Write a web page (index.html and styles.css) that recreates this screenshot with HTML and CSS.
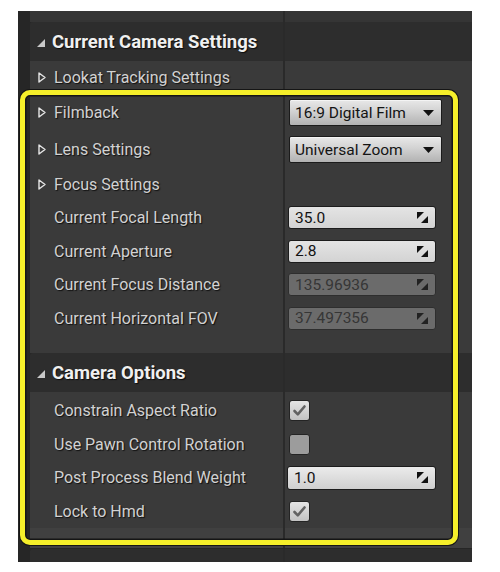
FILE: index.html
```html
<!DOCTYPE html>
<html>
<head>
<meta charset="utf-8">
<link rel="stylesheet" href="styles.css">
</head>
<body>
<div class="panel">
  <div class="strip split"></div>

  <div class="cat-header split">
    <div class="hcell">
      <svg class="tri-open" width="8" height="8" viewBox="0 0 8 8"><polygon points="8,0 8,8 0,8" fill="#c9c9c9"/></svg>
      <span class="htext">Current Camera Settings</span>
    </div>
  </div>
  <div class="cat-body split">
    <div class="row h33">
      <div class="lcell"><svg class="tri-closed" width="8" height="11" viewBox="0 0 8 11"><polygon points="1,1 7,5.5 1,10" fill="none" stroke="#e6e6e6" stroke-width="1.4" stroke-linejoin="round"/></svg><span class="label">Lookat Tracking Settings</span></div>
      <div class="vcell"></div>
    </div>
    <div class="row h37">
      <div class="lcell"><svg class="tri-closed" width="8" height="11" viewBox="0 0 8 11"><polygon points="1,1 7,5.5 1,10" fill="none" stroke="#e6e6e6" stroke-width="1.4" stroke-linejoin="round"/></svg><span class="label">Filmback</span></div>
      <div class="vcell"><div class="combo"><span>16:9 Digital Film</span><svg width="11" height="6" viewBox="0 0 11 6"><polygon points="0,0 11,0 5.5,6" fill="#111"/></svg></div></div>
    </div>
    <div class="row h37">
      <div class="lcell"><svg class="tri-closed" width="8" height="11" viewBox="0 0 8 11"><polygon points="1,1 7,5.5 1,10" fill="none" stroke="#e6e6e6" stroke-width="1.4" stroke-linejoin="round"/></svg><span class="label">Lens Settings</span></div>
      <div class="vcell"><div class="combo"><span>Universal Zoom</span><svg width="11" height="6" viewBox="0 0 11 6"><polygon points="0,0 11,0 5.5,6" fill="#111"/></svg></div></div>
    </div>
    <div class="row h33">
      <div class="lcell"><svg class="tri-closed" width="8" height="11" viewBox="0 0 8 11"><polygon points="1,1 7,5.5 1,10" fill="none" stroke="#e6e6e6" stroke-width="1.4" stroke-linejoin="round"/></svg><span class="label">Focus Settings</span></div>
      <div class="vcell"></div>
    </div>
    <div class="row hp">
      <div class="lcell prop"><span class="label">Current Focal Length</span></div>
      <div class="vcell"><div class="num"><span>35.0</span><svg width="11" height="11" viewBox="0 0 11 11"><polygon points="0,0 7,0 0,7" fill="#111"/><polygon points="11,11 4,11 11,4" fill="#111"/></svg></div></div>
    </div>
    <div class="row hp">
      <div class="lcell prop"><span class="label">Current Aperture</span></div>
      <div class="vcell"><div class="num"><span>2.8</span><svg width="11" height="11" viewBox="0 0 11 11"><polygon points="0,0 7,0 0,7" fill="#111"/><polygon points="11,11 4,11 11,4" fill="#111"/></svg></div></div>
    </div>
    <div class="row hp">
      <div class="lcell prop"><span class="label">Current Focus Distance</span></div>
      <div class="vcell"><div class="num disabled"><span>135.96936</span><svg width="11" height="11" viewBox="0 0 11 11"><polygon points="0,0 7,0 0,7" fill="#222"/><polygon points="11,11 4,11 11,4" fill="#222"/></svg></div></div>
    </div>
    <div class="row hp">
      <div class="lcell prop"><span class="label">Current Horizontal FOV</span></div>
      <div class="vcell"><div class="num disabled"><span>37.497356</span><svg width="11" height="11" viewBox="0 0 11 11"><polygon points="0,0 7,0 0,7" fill="#222"/><polygon points="11,11 4,11 11,4" fill="#222"/></svg></div></div>
    </div>
    <div class="spacer"></div>
  </div>

  <div class="cat-header split">
    <div class="hcell">
      <svg class="tri-open" width="8" height="8" viewBox="0 0 8 8"><polygon points="8,0 8,8 0,8" fill="#c9c9c9"/></svg>
      <span class="htext">Camera Options</span>
    </div>
  </div>
  <div class="cat-body split body2">
    <div class="row hp">
      <div class="lcell prop"><span class="label">Constrain Aspect Ratio</span></div>
      <div class="vcell"><div class="check on"><svg width="21" height="21" viewBox="0 0 21 21"><path d="M5.5 11 L8.8 14.3 L15.5 6.5" fill="none" stroke="#626262" stroke-width="2.6" stroke-linecap="round" stroke-linejoin="round"/></svg></div></div>
    </div>
    <div class="row hp">
      <div class="lcell prop"><span class="label">Use Pawn Control Rotation</span></div>
      <div class="vcell"><div class="check off"></div></div>
    </div>
    <div class="row hp">
      <div class="lcell prop"><span class="label">Post Process Blend Weight</span></div>
      <div class="vcell"><div class="num wide"><span>1.0</span><svg width="11" height="11" viewBox="0 0 11 11"><polygon points="0,0 7,0 0,7" fill="#111"/><polygon points="11,11 4,11 11,4" fill="#111"/></svg></div></div>
    </div>
    <div class="row hp">
      <div class="lcell prop"><span class="label">Lock to Hmd</span></div>
      <div class="vcell"><div class="check on"><svg width="21" height="21" viewBox="0 0 21 21"><path d="M5.5 11 L8.8 14.3 L15.5 6.5" fill="none" stroke="#626262" stroke-width="2.6" stroke-linecap="round" stroke-linejoin="round"/></svg></div></div>
    </div>
  </div>
  <div class="cat-foot split"></div>
  <div class="cat-header split next"></div>

  <div class="highlight"></div>
</div>
</body>
</html>
```
FILE: styles.css
```css
html, body {
  margin: 0;
  padding: 0;
  background: #ffffff;
}

.panel {
  position: relative;
  margin: 11px 0 0 18px;
  width: 454px;
  height: 551px;
  overflow: hidden;
  background: #262626;
  padding-left: 12px;
  box-sizing: border-box;
  font-family: Roboto, "Liberation Sans", sans-serif;
}

.split {
  --bg: #3a3a3a;
  background: linear-gradient(to right, var(--bg) 253px, #2a2a2a 253px, #2a2a2a 255px, var(--bg) 255px);
}

.strip {
  height: 11px;
  --bg: #353535;
}

.cat-header {
  height: 39px;
  --bg: #2d2d2d;
  border-radius: 3px 0 0 0;
  display: flex;
  align-items: center;
}

.hcell {
  display: flex;
  align-items: center;
  padding-left: 7px;
}

.tri-open {
  margin-right: 7px;
  margin-top: 2px;
}

.htext {
  font-weight: 700;
  font-size: 18.5px;
  color: #f0f0f0;
  text-shadow: 1px 1px 1px #0c0c0c;
}

.cat-body {
  --bg: #3a3a3a;
}

.body2 {
  padding-top: 2px;
}

.row {
  display: grid;
  grid-template-columns: 253px 1fr;
}

.h33 { height: 33px; }
.h37 { height: 37px; }
.hp { height: 33.5px; }

.spacer { height: 18px; }

.lcell {
  display: flex;
  align-items: center;
  padding-left: 8px;
}

.lcell.prop {
  padding-left: 24px;
}

.tri-closed {
  margin-right: 8px;
}

.label {
  font-size: 16px;
  color: #d2d2d2;
  text-shadow: 1px 1px 1px #111;
}

.vcell {
  display: flex;
  align-items: center;
  padding-left: 5px;
}

.combo {
  width: 153px;
  height: 27px;
  box-sizing: border-box;
  margin-left: 1px;
  border: 1px solid #1b1b1b;
  border-radius: 2px;
  background: linear-gradient(#e8e8e8, #d2d2d2 45%, #b2b2b2);
  box-shadow: inset 0 1px 0 #f4f4f4;
  display: flex;
  align-items: center;
  justify-content: space-between;
  padding: 0 7px 0 5px;
  font-size: 15.5px;
  color: #141414;
}

.num {
  width: 148px;
  height: 23px;
  box-sizing: border-box;
  border: 1px solid #1c1c1c;
  border-radius: 3px;
  background: linear-gradient(#e4e4e4, #d3d3d3);
  display: flex;
  align-items: center;
  justify-content: space-between;
  padding: 0 7px 0 6px;
  font-size: 15.5px;
  color: #121212;
}

.num.wide {
  height: 24px;
  width: 149px;
  margin-left: -1px;
  background: linear-gradient(#ebebeb, #cfcfcf);
}

.num.disabled {
  background: #6b6b6b;
  border-color: #2e2e2e;
  color: #363636;
}

.check {
  width: 21px;
  height: 21px;
  box-sizing: border-box;
  margin-left: 1px;
  border-radius: 3px;
  border: 1px solid #242424;
}

.check svg {
  display: block;
  margin: -1px;
}

.check.on {
  background: linear-gradient(#e4e4e4, #c2c2c2);
}

.check.off {
  background: #9c9c9c;
}

.cat-foot {
  height: 20px;
  --bg: #404040;
}

.cat-header.next {
  margin-top: 1px;
}

.highlight {
  position: absolute;
  left: 2px;
  top: 79px;
  width: 438px;
  height: 455px;
  box-sizing: border-box;
  border: 5px solid #f5ef2a;
  border-radius: 10px;
  box-shadow: 0 0 0 1px #151515, inset 0 0 0 1.5px #151515;
  pointer-events: none;
}
```
